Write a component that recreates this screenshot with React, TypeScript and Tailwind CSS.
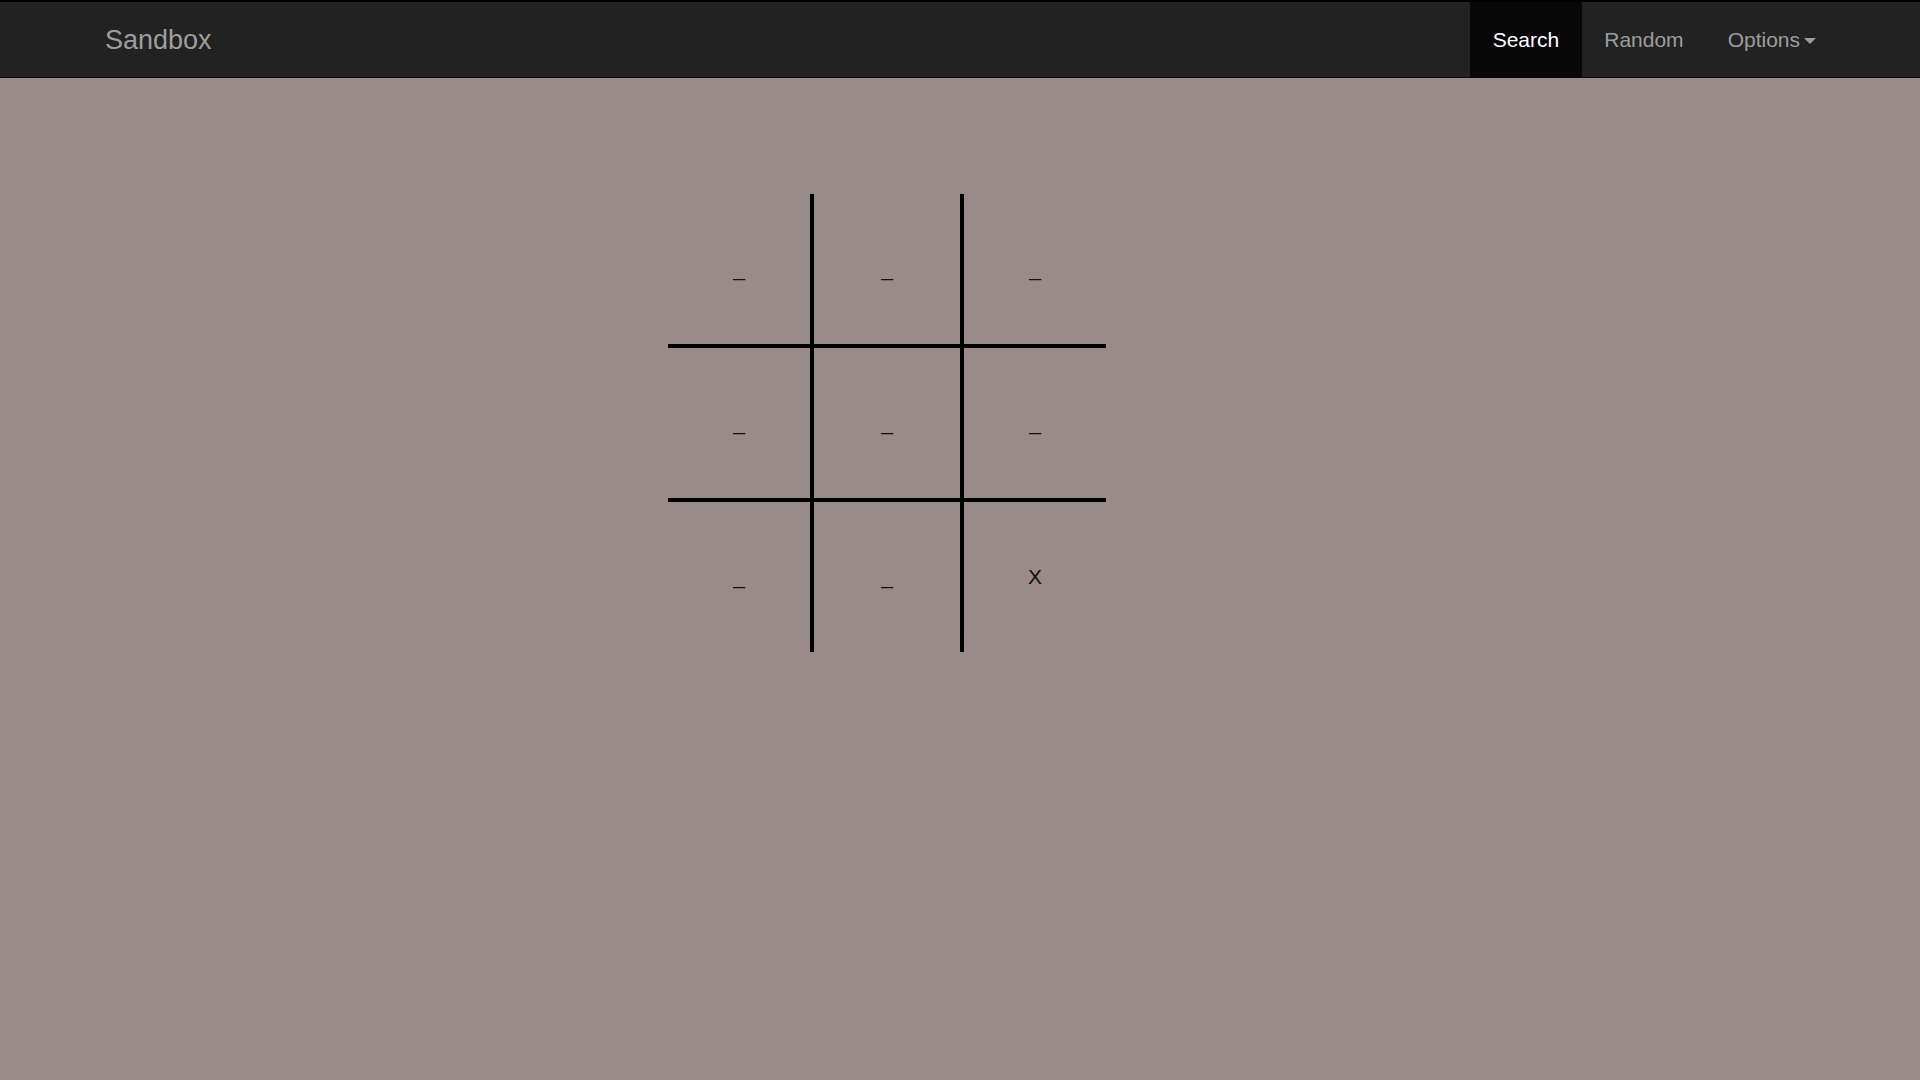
import React from 'react'

const BOARD = [
  ['_', '_', '_'],
  ['_', '_', '_'],
  ['_', '_', 'X'],
]

const COL_CLASSES = ['w-[146px] border-r-4', 'w-[150px] border-r-4', 'w-[142px]']
const ROW_CLASSES = ['h-[154px] border-b-4', 'h-[154px] border-b-4', 'h-[150px]']

export default function App() {
  return (
    <div className="min-h-[1080px] bg-[#988b8a] font-['Liberation_Sans',Arial,sans-serif]">
      <nav className="h-[78px] bg-[#222] border-t-2 border-b border-t-black border-b-[#080808]">
        <div className="flex h-[75px] items-center justify-between pl-[105px] pr-[82px]">
          <span className="text-[27px] leading-[30px] text-[#9d9d9d]">Sandbox</span>
          <ul className="flex h-full">
            <li className="flex items-center bg-[#080808] px-[23px] text-[21px] text-white">Search</li>
            <li className="flex items-center px-[22px] text-[21px] text-[#9d9d9d]">Random</li>
            <li className="flex items-center px-[22px] text-[21px] text-[#9d9d9d]">
              Options
              <span className="ml-[4px] mt-[2px] inline-block h-0 w-0 border-x-[6px] border-t-[6px] border-x-transparent border-t-[#9d9d9d]" />
            </li>
          </ul>
        </div>
      </nav>
      <main className="pl-[668px] pt-[116px]">
        <div className="flex flex-col">
          {BOARD.map((row, r) => (
            <div key={r} className="flex">
              {row.map((cell, c) => (
                <div
                  key={c}
                  className={`flex items-center justify-center border-black text-[21px] text-[#111] ${COL_CLASSES[c]} ${ROW_CLASSES[r]}`}
                >
                  {cell}
                </div>
              ))}
            </div>
          ))}
        </div>
      </main>
    </div>
  )
}
